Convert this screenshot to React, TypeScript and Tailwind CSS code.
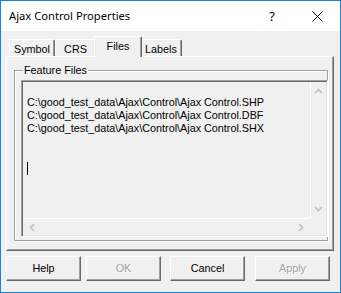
import React from "react";

const Up = () => (
  <svg width="9" height="6" viewBox="0 0 9 6"><path d="M1 5 L4.5 1.5 L8 5" fill="none" stroke="#c0c0c0" strokeWidth="1.6" /></svg>
);
const Down = () => (
  <svg width="9" height="6" viewBox="0 0 9 6"><path d="M1 1 L4.5 4.5 L8 1" fill="none" stroke="#c0c0c0" strokeWidth="1.6" /></svg>
);
const Left = () => (
  <svg width="6" height="9" viewBox="0 0 6 9"><path d="M5 1 L1.5 4.5 L5 8" fill="none" stroke="#c0c0c0" strokeWidth="1.6" /></svg>
);
const Right = () => (
  <svg width="6" height="9" viewBox="0 0 6 9"><path d="M1 1 L4.5 4.5 L1 8" fill="none" stroke="#c0c0c0" strokeWidth="1.6" /></svg>
);

function Tab({ label, selected, w }: { label: string; selected?: boolean; w: string }) {
  if (selected) {
    return (
      <div className={`relative z-10 -mx-[2px] h-[21px] ${w} bg-[#f0f0f0] border-l border-t border-white border-r border-r-[#696969] rounded-tr-[2px] shadow-[inset_-1px_0_0_#a0a0a0] flex justify-center pt-[3px]`}>
        <span>{label}</span>
      </div>
    );
  }
  return (
    <div className={`h-[18px] ${w} bg-[#f0f0f0] border-l border-t border-white border-r border-r-[#696969] rounded-tr-[2px] shadow-[inset_-1px_0_0_#a0a0a0] flex justify-center pt-[3px]`}>
      <span>{label}</span>
    </div>
  );
}

function Btn({ label, disabled, cls }: { label: string; disabled?: boolean; cls?: string }) {
  return (
    <div className={`w-[75px] h-[25px] border-l border-t border-white border-r border-b border-r-[#696969] border-b-[#696969] shadow-[inset_-1px_-1px_0_#a0a0a0] flex items-center justify-center ${cls ?? ""}`}>
      <span className={disabled ? "text-[#a0a0a0] [text-shadow:1px_1px_0_#ffffff]" : "text-black"}>{label}</span>
    </div>
  );
}

export default function App() {
  const lines = [
    "C:\\good_test_data\\Ajax\\Control\\Ajax Control.SHP",
    "C:\\good_test_data\\Ajax\\Control\\Ajax Control.DBF",
    "C:\\good_test_data\\Ajax\\Control\\Ajax Control.SHX",
  ];
  return (
    <div className="w-[341px] h-[293px] border border-[#1883d7] bg-[#f0f0f0] flex flex-col overflow-hidden text-[10.8px] leading-[13px] text-black" style={{ fontFamily: '"Liberation Sans", Arial, sans-serif' }}>
      {/* title bar */}
      <div className="h-[30px] bg-white flex items-center shrink-0" style={{ fontFamily: '"Noto Sans", sans-serif' }}>
        <span className="ml-[8px] text-[11.2px] text-black leading-none">Ajax Control Properties</span>
        <span className="ml-auto text-[13px] leading-none mr-[37px]">?</span>
        <svg width="11" height="11" viewBox="0 0 11 11" className="mr-[17px]">
          <path d="M0.5 0.5 L10.5 10.5 M10.5 0.5 L0.5 10.5" stroke="#000" strokeWidth="1" />
        </svg>
      </div>
      {/* body */}
      <div className="flex flex-col pl-[5px] pt-[6px]">
        <div className="flex items-end pl-[3px] h-[20px]">
          <Tab label="Symbol" w="w-[46px]" />
          <Tab label="CRS" w="w-[41px]" />
          <Tab label="Files" selected w="w-[48px]" />
          <Tab label="Labels" w="w-[42px]" />
        </div>
        <div className="w-[328px] h-[195px] -mt-[1px] border-l border-t border-white border-r border-b border-r-[#696969] border-b-[#696969] shadow-[inset_-1px_-1px_0_#a0a0a0] pl-[7px] pt-[13px]">
          {/* group box */}
          <div className="relative w-[314px] h-[171px] border border-[#a0a0a0] shadow-[inset_1px_1px_0_#ffffff,1px_1px_0_#ffffff]">
            <span className="absolute left-[8px] -top-[6px] bg-[#f0f0f0] px-[1px] leading-[11px]">Feature Files</span>
            {/* textarea */}
            <div className="absolute left-[6px] top-[9px] w-[307px] h-[157px] border-l border-t border-[#a0a0a0] border-r border-b border-r-white border-b-white shadow-[inset_1px_1px_0_#696969,inset_-1px_-1px_0_#e3e3e3] flex flex-col">
              <div className="flex flex-1">
                <div className="flex-1 pl-[5px] pt-[15px]">
                  {lines.map((l) => (
                    <div key={l} className="whitespace-pre h-[13px]">{l}</div>
                  ))}
                  <div className="mt-[27px] ml-[0px] w-[1px] h-[13px] bg-black" />
                </div>
                <div className="w-[16px] mr-[1px] mt-[1px] border-l border-white flex flex-col items-center justify-between pt-[6px] pb-[6px]">
                  <Up />
                  <Down />
                </div>
              </div>
              <div className="h-[17px] mb-[1px] ml-[1px] flex">
                <div className="flex-1 border-t border-white flex items-center justify-between pl-[6px] pr-[6px]">
                  <Left />
                  <Right />
                </div>
                <div className="w-[17px]" />
              </div>
            </div>
          </div>
        </div>
        <div className="flex mt-[5px]">
          <Btn label="Help" cls="ml-[0px]" />
          <Btn label="OK" disabled cls="ml-[5px]" />
          <Btn label="Cancel" cls="ml-[9px]" />
          <Btn label="Apply" disabled cls="ml-[10px]" />
        </div>
      </div>
    </div>
  );
}
